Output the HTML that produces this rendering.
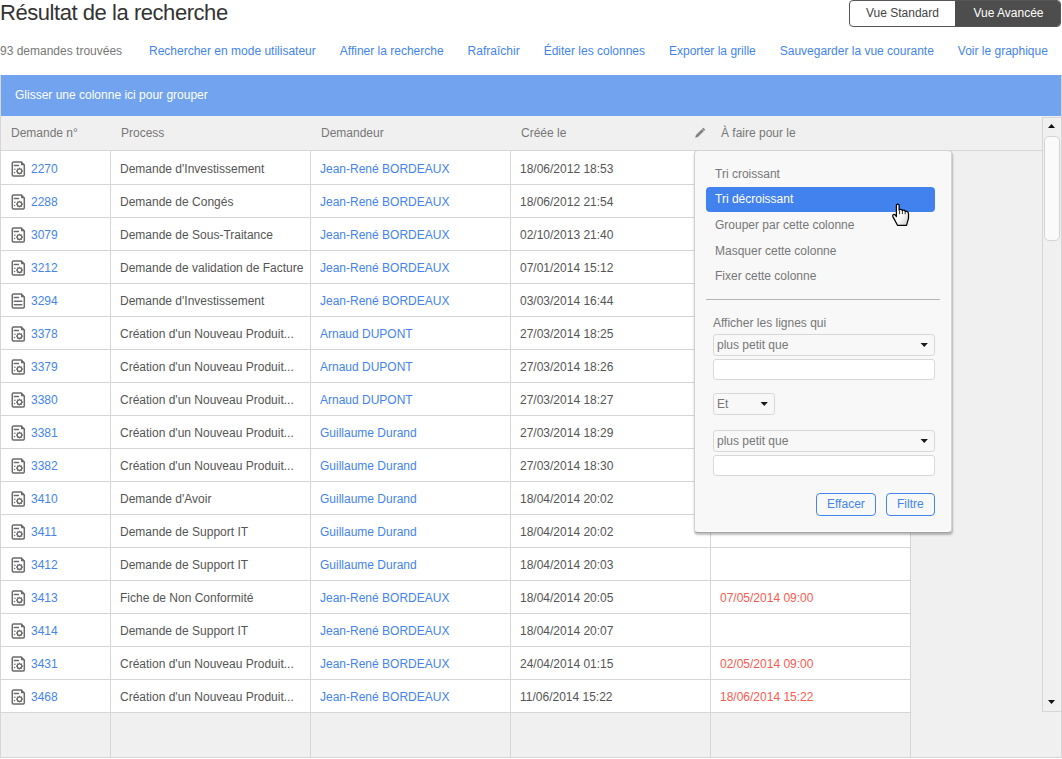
<!DOCTYPE html><html><head><meta charset="utf-8"><style>
*{margin:0;padding:0;box-sizing:border-box}
html,body{width:1062px;height:759px;overflow:hidden;background:#fff;font-family:"Liberation Sans",sans-serif;font-size:12px}
.t{position:absolute;white-space:pre;line-height:14px;font-size:12px}
.ic{position:absolute;display:block}
.title{position:absolute;left:0;top:1px;font-size:22px;letter-spacing:-0.45px;line-height:24px;color:#333333;white-space:pre}
.toggle{position:absolute;left:849px;top:0;width:212px;height:27px;border:1px solid #555;border-radius:4px;overflow:hidden;background:#fff}
.toggle div{position:absolute;top:0;height:25px;line-height:25px;text-align:center;font-size:12px;white-space:pre}
.std{left:0;width:105px;color:#444}
.adv{left:105px;width:105px;padding-left:2px;background:#4d4d4d;color:#fff}
.links{position:absolute;left:149px;top:44px;line-height:14px;white-space:pre;color:#4384ee}
.links span{margin-right:24px}
.grid{position:absolute;left:0;top:75px;width:1062px;height:683px;border:1px solid #d6d6d6;background:#f0f0f0}
.group{position:absolute;left:1px;top:75px;width:1060px;height:41px;background:#71a3ee}
.hdr{position:absolute;left:1px;top:150px;width:1041px;height:1px;background:#d6d6d6}
.body{position:absolute;left:1px;top:151px;width:909px;height:561px;background:#fff}
.hl{position:absolute;left:1px;width:909px;height:1px;background:#d6d6d6}
.vl{position:absolute;top:151px;width:1px;height:606px;background:#d6d6d6}
.sb{position:absolute;left:1042px;top:117px;width:19px;height:595px;border-left:1px solid #d6d6d6;border-top:1px solid #d6d6d6;border-bottom:1px solid #d6d6d6;background:#f0f0f0}
.thumb{position:absolute;left:1px;top:18px;width:16px;height:105px;border:1px solid #d4d4d4;border-radius:5px;background:#fafafa}
.menu{position:absolute;left:694px;top:150px;width:258px;height:383px;background:#f8f8f8;border:1px solid #d2d2d2;border-bottom-color:#a4a4a4;border-radius:4px;box-shadow:0.5px 2px 2px rgba(0,0,0,.25),inset 0 -1px 0 #fcfcfc,inset -1px 0 0 #fafafa}
.sel{position:absolute;left:706px;top:187px;width:229px;height:25px;background:#4282ee;border-radius:4px}
.divider{position:absolute;left:706px;top:299px;width:234px;height:1px;background:#b5b5b5}
.selbox{position:absolute;border:1px solid #d8d8d8;border-radius:3px;background:transparent}
.inp{position:absolute;border:1px solid #d8d8d8;border-radius:3px;background:#fff}
.btn{position:absolute;border:1px solid #4384ee;border-radius:4px;background:#f8f8f8}
</style></head><body><div class="title">Résultat de la recherche</div>
<div class="toggle"><div class="std">Vue Standard</div><div class="adv">Vue Avancée</div></div>
<div class="t" style="left:0px;top:44px;color:#777777;">93 demandes trouvées</div>
<div class="links"><span>Rechercher en mode utilisateur</span><span>Affiner la recherche</span><span>Rafraîchir</span><span>Éditer les colonnes</span><span>Exporter la grille</span><span>Sauvegarder la vue courante</span><span>Voir le graphique</span></div>
<div class="grid"></div>
<div class="group"></div>
<div class="t" style="left:15px;top:88px;color:#ffffff;">Glisser une colonne ici pour grouper</div>
<div class="hdr"></div>
<div class="t" style="left:11px;top:126px;color:#777777;">Demande n°</div>
<div class="t" style="left:121px;top:126px;color:#777777;">Process</div>
<div class="t" style="left:321px;top:126px;color:#777777;">Demandeur</div>
<div class="t" style="left:521px;top:126px;color:#777777;">Créée le</div>
<div class="t" style="left:721px;top:126px;color:#777777;">À faire pour le</div>
<svg class="ic" style="left:692px;top:125px" width="16" height="16" viewBox="0 0 16 16"><path d="M3.2 12.8L3.9 10.1L11.3 2.7L13.3 4.7L5.9 12.1Z" fill="#838383"/><path d="M9.9 4.1L11.9 6.1" stroke="#e8e8e8" stroke-width="0.6"/></svg>
<div class="body"></div>
<div class="hl" style="top:184px"></div>
<div class="hl" style="top:217px"></div>
<div class="hl" style="top:250px"></div>
<div class="hl" style="top:283px"></div>
<div class="hl" style="top:316px"></div>
<div class="hl" style="top:349px"></div>
<div class="hl" style="top:382px"></div>
<div class="hl" style="top:415px"></div>
<div class="hl" style="top:448px"></div>
<div class="hl" style="top:481px"></div>
<div class="hl" style="top:514px"></div>
<div class="hl" style="top:547px"></div>
<div class="hl" style="top:580px"></div>
<div class="hl" style="top:613px"></div>
<div class="hl" style="top:646px"></div>
<div class="hl" style="top:679px"></div>
<div class="hl" style="top:712px"></div>
<div class="vl" style="left:110px"></div>
<div class="vl" style="left:310px"></div>
<div class="vl" style="left:510px"></div>
<div class="vl" style="left:710px"></div>
<div class="vl" style="left:910px"></div>
<svg class="ic" style="left:10px;top:159px" width="17" height="19" viewBox="0 0 17 19"><path d="M3.4 3H11.2L14.3 6.1V15.8Q14.3 16.9 13.2 16.9H3.4Q2.3 16.9 2.3 15.8V4.1Q2.3 3 3.4 3Z" fill="#fff" stroke="#6b6b6b" stroke-width="1.5"/><path d="M11 2.6V6.3H14.7Z" fill="#6b6b6b"/><path d="M4.3 6.5H8.5" stroke="#6b6b6b" stroke-width="1.4" stroke-linecap="round"/><circle cx="4.9" cy="10.2" r="0.8" fill="#6b6b6b"/><circle cx="4.6" cy="13.4" r="0.75" fill="#6b6b6b"/><g transform="translate(9.5 12.1)" stroke="#6b6b6b"><circle r="2.3" fill="none" stroke-width="1.3"/><path d="M0 -3.4V-2M0 2V3.4M-3.4 0H-2M2 0H3.4M-2.4 -2.4L-1.5 -1.5M2.4 2.4L1.5 1.5M-2.4 2.4L-1.5 1.5M2.4 -2.4L1.5 -1.5" stroke-width="1.2"/></g></svg>
<div class="t" style="left:31px;top:162px;color:#4384ee;">2270</div>
<div class="t" style="left:120px;top:162px;color:#555555;">Demande d'Investissement</div>
<div class="t" style="left:320px;top:162px;color:#4384ee;">Jean-René BORDEAUX</div>
<div class="t" style="left:520px;top:162px;color:#555555;">18/06/2012 18:53</div>
<svg class="ic" style="left:10px;top:192px" width="17" height="19" viewBox="0 0 17 19"><path d="M3.4 3H11.2L14.3 6.1V15.8Q14.3 16.9 13.2 16.9H3.4Q2.3 16.9 2.3 15.8V4.1Q2.3 3 3.4 3Z" fill="#fff" stroke="#6b6b6b" stroke-width="1.5"/><path d="M11 2.6V6.3H14.7Z" fill="#6b6b6b"/><path d="M4.3 6.5H8.5" stroke="#6b6b6b" stroke-width="1.4" stroke-linecap="round"/><circle cx="4.9" cy="10.2" r="0.8" fill="#6b6b6b"/><circle cx="4.6" cy="13.4" r="0.75" fill="#6b6b6b"/><g transform="translate(9.5 12.1)" stroke="#6b6b6b"><circle r="2.3" fill="none" stroke-width="1.3"/><path d="M0 -3.4V-2M0 2V3.4M-3.4 0H-2M2 0H3.4M-2.4 -2.4L-1.5 -1.5M2.4 2.4L1.5 1.5M-2.4 2.4L-1.5 1.5M2.4 -2.4L1.5 -1.5" stroke-width="1.2"/></g></svg>
<div class="t" style="left:31px;top:195px;color:#4384ee;">2288</div>
<div class="t" style="left:120px;top:195px;color:#555555;">Demande de Congés</div>
<div class="t" style="left:320px;top:195px;color:#4384ee;">Jean-René BORDEAUX</div>
<div class="t" style="left:520px;top:195px;color:#555555;">18/06/2012 21:54</div>
<svg class="ic" style="left:10px;top:225px" width="17" height="19" viewBox="0 0 17 19"><path d="M3.4 3H11.2L14.3 6.1V15.8Q14.3 16.9 13.2 16.9H3.4Q2.3 16.9 2.3 15.8V4.1Q2.3 3 3.4 3Z" fill="#fff" stroke="#6b6b6b" stroke-width="1.5"/><path d="M11 2.6V6.3H14.7Z" fill="#6b6b6b"/><path d="M4.3 6.5H8.5" stroke="#6b6b6b" stroke-width="1.4" stroke-linecap="round"/><circle cx="4.9" cy="10.2" r="0.8" fill="#6b6b6b"/><circle cx="4.6" cy="13.4" r="0.75" fill="#6b6b6b"/><g transform="translate(9.5 12.1)" stroke="#6b6b6b"><circle r="2.3" fill="none" stroke-width="1.3"/><path d="M0 -3.4V-2M0 2V3.4M-3.4 0H-2M2 0H3.4M-2.4 -2.4L-1.5 -1.5M2.4 2.4L1.5 1.5M-2.4 2.4L-1.5 1.5M2.4 -2.4L1.5 -1.5" stroke-width="1.2"/></g></svg>
<div class="t" style="left:31px;top:228px;color:#4384ee;">3079</div>
<div class="t" style="left:120px;top:228px;color:#555555;">Demande de Sous-Traitance</div>
<div class="t" style="left:320px;top:228px;color:#4384ee;">Jean-René BORDEAUX</div>
<div class="t" style="left:520px;top:228px;color:#555555;">02/10/2013 21:40</div>
<svg class="ic" style="left:10px;top:258px" width="17" height="19" viewBox="0 0 17 19"><path d="M3.4 3H11.2L14.3 6.1V15.8Q14.3 16.9 13.2 16.9H3.4Q2.3 16.9 2.3 15.8V4.1Q2.3 3 3.4 3Z" fill="#fff" stroke="#6b6b6b" stroke-width="1.5"/><path d="M11 2.6V6.3H14.7Z" fill="#6b6b6b"/><path d="M4.3 6.5H8.5" stroke="#6b6b6b" stroke-width="1.4" stroke-linecap="round"/><circle cx="4.9" cy="10.2" r="0.8" fill="#6b6b6b"/><circle cx="4.6" cy="13.4" r="0.75" fill="#6b6b6b"/><g transform="translate(9.5 12.1)" stroke="#6b6b6b"><circle r="2.3" fill="none" stroke-width="1.3"/><path d="M0 -3.4V-2M0 2V3.4M-3.4 0H-2M2 0H3.4M-2.4 -2.4L-1.5 -1.5M2.4 2.4L1.5 1.5M-2.4 2.4L-1.5 1.5M2.4 -2.4L1.5 -1.5" stroke-width="1.2"/></g></svg>
<div class="t" style="left:31px;top:261px;color:#4384ee;">3212</div>
<div class="t" style="left:120px;top:261px;color:#555555;">Demande de validation de Facture</div>
<div class="t" style="left:320px;top:261px;color:#4384ee;">Jean-René BORDEAUX</div>
<div class="t" style="left:520px;top:261px;color:#555555;">07/01/2014 15:12</div>
<svg class="ic" style="left:10px;top:291px" width="17" height="19" viewBox="0 0 17 19"><path d="M3.4 3H11.2L14.3 6.1V15.8Q14.3 16.9 13.2 16.9H3.4Q2.3 16.9 2.3 15.8V4.1Q2.3 3 3.4 3Z" fill="#fff" stroke="#6b6b6b" stroke-width="1.5"/><path d="M11 2.6V6.3H14.7Z" fill="#6b6b6b"/><path d="M4.3 6.5H8.5M4.3 10.2H11.8M4.3 13.7H11.8" stroke="#6b6b6b" stroke-width="1.4" stroke-linecap="round"/></svg>
<div class="t" style="left:31px;top:294px;color:#4384ee;">3294</div>
<div class="t" style="left:120px;top:294px;color:#555555;">Demande d'Investissement</div>
<div class="t" style="left:320px;top:294px;color:#4384ee;">Jean-René BORDEAUX</div>
<div class="t" style="left:520px;top:294px;color:#555555;">03/03/2014 16:44</div>
<svg class="ic" style="left:10px;top:324px" width="17" height="19" viewBox="0 0 17 19"><path d="M3.4 3H11.2L14.3 6.1V15.8Q14.3 16.9 13.2 16.9H3.4Q2.3 16.9 2.3 15.8V4.1Q2.3 3 3.4 3Z" fill="#fff" stroke="#6b6b6b" stroke-width="1.5"/><path d="M11 2.6V6.3H14.7Z" fill="#6b6b6b"/><path d="M4.3 6.5H8.5" stroke="#6b6b6b" stroke-width="1.4" stroke-linecap="round"/><circle cx="4.9" cy="10.2" r="0.8" fill="#6b6b6b"/><circle cx="4.6" cy="13.4" r="0.75" fill="#6b6b6b"/><g transform="translate(9.5 12.1)" stroke="#6b6b6b"><circle r="2.3" fill="none" stroke-width="1.3"/><path d="M0 -3.4V-2M0 2V3.4M-3.4 0H-2M2 0H3.4M-2.4 -2.4L-1.5 -1.5M2.4 2.4L1.5 1.5M-2.4 2.4L-1.5 1.5M2.4 -2.4L1.5 -1.5" stroke-width="1.2"/></g></svg>
<div class="t" style="left:31px;top:327px;color:#4384ee;">3378</div>
<div class="t" style="left:120px;top:327px;color:#555555;">Création d'un Nouveau Produit...</div>
<div class="t" style="left:320px;top:327px;color:#4384ee;">Arnaud DUPONT</div>
<div class="t" style="left:520px;top:327px;color:#555555;">27/03/2014 18:25</div>
<svg class="ic" style="left:10px;top:357px" width="17" height="19" viewBox="0 0 17 19"><path d="M3.4 3H11.2L14.3 6.1V15.8Q14.3 16.9 13.2 16.9H3.4Q2.3 16.9 2.3 15.8V4.1Q2.3 3 3.4 3Z" fill="#fff" stroke="#6b6b6b" stroke-width="1.5"/><path d="M11 2.6V6.3H14.7Z" fill="#6b6b6b"/><path d="M4.3 6.5H8.5" stroke="#6b6b6b" stroke-width="1.4" stroke-linecap="round"/><circle cx="4.9" cy="10.2" r="0.8" fill="#6b6b6b"/><circle cx="4.6" cy="13.4" r="0.75" fill="#6b6b6b"/><g transform="translate(9.5 12.1)" stroke="#6b6b6b"><circle r="2.3" fill="none" stroke-width="1.3"/><path d="M0 -3.4V-2M0 2V3.4M-3.4 0H-2M2 0H3.4M-2.4 -2.4L-1.5 -1.5M2.4 2.4L1.5 1.5M-2.4 2.4L-1.5 1.5M2.4 -2.4L1.5 -1.5" stroke-width="1.2"/></g></svg>
<div class="t" style="left:31px;top:360px;color:#4384ee;">3379</div>
<div class="t" style="left:120px;top:360px;color:#555555;">Création d'un Nouveau Produit...</div>
<div class="t" style="left:320px;top:360px;color:#4384ee;">Arnaud DUPONT</div>
<div class="t" style="left:520px;top:360px;color:#555555;">27/03/2014 18:26</div>
<svg class="ic" style="left:10px;top:390px" width="17" height="19" viewBox="0 0 17 19"><path d="M3.4 3H11.2L14.3 6.1V15.8Q14.3 16.9 13.2 16.9H3.4Q2.3 16.9 2.3 15.8V4.1Q2.3 3 3.4 3Z" fill="#fff" stroke="#6b6b6b" stroke-width="1.5"/><path d="M11 2.6V6.3H14.7Z" fill="#6b6b6b"/><path d="M4.3 6.5H8.5" stroke="#6b6b6b" stroke-width="1.4" stroke-linecap="round"/><circle cx="4.9" cy="10.2" r="0.8" fill="#6b6b6b"/><circle cx="4.6" cy="13.4" r="0.75" fill="#6b6b6b"/><g transform="translate(9.5 12.1)" stroke="#6b6b6b"><circle r="2.3" fill="none" stroke-width="1.3"/><path d="M0 -3.4V-2M0 2V3.4M-3.4 0H-2M2 0H3.4M-2.4 -2.4L-1.5 -1.5M2.4 2.4L1.5 1.5M-2.4 2.4L-1.5 1.5M2.4 -2.4L1.5 -1.5" stroke-width="1.2"/></g></svg>
<div class="t" style="left:31px;top:393px;color:#4384ee;">3380</div>
<div class="t" style="left:120px;top:393px;color:#555555;">Création d'un Nouveau Produit...</div>
<div class="t" style="left:320px;top:393px;color:#4384ee;">Arnaud DUPONT</div>
<div class="t" style="left:520px;top:393px;color:#555555;">27/03/2014 18:27</div>
<svg class="ic" style="left:10px;top:423px" width="17" height="19" viewBox="0 0 17 19"><path d="M3.4 3H11.2L14.3 6.1V15.8Q14.3 16.9 13.2 16.9H3.4Q2.3 16.9 2.3 15.8V4.1Q2.3 3 3.4 3Z" fill="#fff" stroke="#6b6b6b" stroke-width="1.5"/><path d="M11 2.6V6.3H14.7Z" fill="#6b6b6b"/><path d="M4.3 6.5H8.5" stroke="#6b6b6b" stroke-width="1.4" stroke-linecap="round"/><circle cx="4.9" cy="10.2" r="0.8" fill="#6b6b6b"/><circle cx="4.6" cy="13.4" r="0.75" fill="#6b6b6b"/><g transform="translate(9.5 12.1)" stroke="#6b6b6b"><circle r="2.3" fill="none" stroke-width="1.3"/><path d="M0 -3.4V-2M0 2V3.4M-3.4 0H-2M2 0H3.4M-2.4 -2.4L-1.5 -1.5M2.4 2.4L1.5 1.5M-2.4 2.4L-1.5 1.5M2.4 -2.4L1.5 -1.5" stroke-width="1.2"/></g></svg>
<div class="t" style="left:31px;top:426px;color:#4384ee;">3381</div>
<div class="t" style="left:120px;top:426px;color:#555555;">Création d'un Nouveau Produit...</div>
<div class="t" style="left:320px;top:426px;color:#4384ee;">Guillaume Durand</div>
<div class="t" style="left:520px;top:426px;color:#555555;">27/03/2014 18:29</div>
<svg class="ic" style="left:10px;top:456px" width="17" height="19" viewBox="0 0 17 19"><path d="M3.4 3H11.2L14.3 6.1V15.8Q14.3 16.9 13.2 16.9H3.4Q2.3 16.9 2.3 15.8V4.1Q2.3 3 3.4 3Z" fill="#fff" stroke="#6b6b6b" stroke-width="1.5"/><path d="M11 2.6V6.3H14.7Z" fill="#6b6b6b"/><path d="M4.3 6.5H8.5" stroke="#6b6b6b" stroke-width="1.4" stroke-linecap="round"/><circle cx="4.9" cy="10.2" r="0.8" fill="#6b6b6b"/><circle cx="4.6" cy="13.4" r="0.75" fill="#6b6b6b"/><g transform="translate(9.5 12.1)" stroke="#6b6b6b"><circle r="2.3" fill="none" stroke-width="1.3"/><path d="M0 -3.4V-2M0 2V3.4M-3.4 0H-2M2 0H3.4M-2.4 -2.4L-1.5 -1.5M2.4 2.4L1.5 1.5M-2.4 2.4L-1.5 1.5M2.4 -2.4L1.5 -1.5" stroke-width="1.2"/></g></svg>
<div class="t" style="left:31px;top:459px;color:#4384ee;">3382</div>
<div class="t" style="left:120px;top:459px;color:#555555;">Création d'un Nouveau Produit...</div>
<div class="t" style="left:320px;top:459px;color:#4384ee;">Guillaume Durand</div>
<div class="t" style="left:520px;top:459px;color:#555555;">27/03/2014 18:30</div>
<svg class="ic" style="left:10px;top:489px" width="17" height="19" viewBox="0 0 17 19"><path d="M3.4 3H11.2L14.3 6.1V15.8Q14.3 16.9 13.2 16.9H3.4Q2.3 16.9 2.3 15.8V4.1Q2.3 3 3.4 3Z" fill="#fff" stroke="#6b6b6b" stroke-width="1.5"/><path d="M11 2.6V6.3H14.7Z" fill="#6b6b6b"/><path d="M4.3 6.5H8.5" stroke="#6b6b6b" stroke-width="1.4" stroke-linecap="round"/><circle cx="4.9" cy="10.2" r="0.8" fill="#6b6b6b"/><circle cx="4.6" cy="13.4" r="0.75" fill="#6b6b6b"/><g transform="translate(9.5 12.1)" stroke="#6b6b6b"><circle r="2.3" fill="none" stroke-width="1.3"/><path d="M0 -3.4V-2M0 2V3.4M-3.4 0H-2M2 0H3.4M-2.4 -2.4L-1.5 -1.5M2.4 2.4L1.5 1.5M-2.4 2.4L-1.5 1.5M2.4 -2.4L1.5 -1.5" stroke-width="1.2"/></g></svg>
<div class="t" style="left:31px;top:492px;color:#4384ee;">3410</div>
<div class="t" style="left:120px;top:492px;color:#555555;">Demande d'Avoir</div>
<div class="t" style="left:320px;top:492px;color:#4384ee;">Guillaume Durand</div>
<div class="t" style="left:520px;top:492px;color:#555555;">18/04/2014 20:02</div>
<svg class="ic" style="left:10px;top:522px" width="17" height="19" viewBox="0 0 17 19"><path d="M3.4 3H11.2L14.3 6.1V15.8Q14.3 16.9 13.2 16.9H3.4Q2.3 16.9 2.3 15.8V4.1Q2.3 3 3.4 3Z" fill="#fff" stroke="#6b6b6b" stroke-width="1.5"/><path d="M11 2.6V6.3H14.7Z" fill="#6b6b6b"/><path d="M4.3 6.5H8.5" stroke="#6b6b6b" stroke-width="1.4" stroke-linecap="round"/><circle cx="4.9" cy="10.2" r="0.8" fill="#6b6b6b"/><circle cx="4.6" cy="13.4" r="0.75" fill="#6b6b6b"/><g transform="translate(9.5 12.1)" stroke="#6b6b6b"><circle r="2.3" fill="none" stroke-width="1.3"/><path d="M0 -3.4V-2M0 2V3.4M-3.4 0H-2M2 0H3.4M-2.4 -2.4L-1.5 -1.5M2.4 2.4L1.5 1.5M-2.4 2.4L-1.5 1.5M2.4 -2.4L1.5 -1.5" stroke-width="1.2"/></g></svg>
<div class="t" style="left:31px;top:525px;color:#4384ee;">3411</div>
<div class="t" style="left:120px;top:525px;color:#555555;">Demande de Support IT</div>
<div class="t" style="left:320px;top:525px;color:#4384ee;">Guillaume Durand</div>
<div class="t" style="left:520px;top:525px;color:#555555;">18/04/2014 20:02</div>
<svg class="ic" style="left:10px;top:555px" width="17" height="19" viewBox="0 0 17 19"><path d="M3.4 3H11.2L14.3 6.1V15.8Q14.3 16.9 13.2 16.9H3.4Q2.3 16.9 2.3 15.8V4.1Q2.3 3 3.4 3Z" fill="#fff" stroke="#6b6b6b" stroke-width="1.5"/><path d="M11 2.6V6.3H14.7Z" fill="#6b6b6b"/><path d="M4.3 6.5H8.5" stroke="#6b6b6b" stroke-width="1.4" stroke-linecap="round"/><circle cx="4.9" cy="10.2" r="0.8" fill="#6b6b6b"/><circle cx="4.6" cy="13.4" r="0.75" fill="#6b6b6b"/><g transform="translate(9.5 12.1)" stroke="#6b6b6b"><circle r="2.3" fill="none" stroke-width="1.3"/><path d="M0 -3.4V-2M0 2V3.4M-3.4 0H-2M2 0H3.4M-2.4 -2.4L-1.5 -1.5M2.4 2.4L1.5 1.5M-2.4 2.4L-1.5 1.5M2.4 -2.4L1.5 -1.5" stroke-width="1.2"/></g></svg>
<div class="t" style="left:31px;top:558px;color:#4384ee;">3412</div>
<div class="t" style="left:120px;top:558px;color:#555555;">Demande de Support IT</div>
<div class="t" style="left:320px;top:558px;color:#4384ee;">Guillaume Durand</div>
<div class="t" style="left:520px;top:558px;color:#555555;">18/04/2014 20:03</div>
<svg class="ic" style="left:10px;top:588px" width="17" height="19" viewBox="0 0 17 19"><path d="M3.4 3H11.2L14.3 6.1V15.8Q14.3 16.9 13.2 16.9H3.4Q2.3 16.9 2.3 15.8V4.1Q2.3 3 3.4 3Z" fill="#fff" stroke="#6b6b6b" stroke-width="1.5"/><path d="M11 2.6V6.3H14.7Z" fill="#6b6b6b"/><path d="M4.3 6.5H8.5" stroke="#6b6b6b" stroke-width="1.4" stroke-linecap="round"/><circle cx="4.9" cy="10.2" r="0.8" fill="#6b6b6b"/><circle cx="4.6" cy="13.4" r="0.75" fill="#6b6b6b"/><g transform="translate(9.5 12.1)" stroke="#6b6b6b"><circle r="2.3" fill="none" stroke-width="1.3"/><path d="M0 -3.4V-2M0 2V3.4M-3.4 0H-2M2 0H3.4M-2.4 -2.4L-1.5 -1.5M2.4 2.4L1.5 1.5M-2.4 2.4L-1.5 1.5M2.4 -2.4L1.5 -1.5" stroke-width="1.2"/></g></svg>
<div class="t" style="left:31px;top:591px;color:#4384ee;">3413</div>
<div class="t" style="left:120px;top:591px;color:#555555;">Fiche de Non Conformité</div>
<div class="t" style="left:320px;top:591px;color:#4384ee;">Jean-René BORDEAUX</div>
<div class="t" style="left:520px;top:591px;color:#555555;">18/04/2014 20:05</div>
<div class="t" style="left:720px;top:591px;color:#f95a4f;">07/05/2014 09:00</div>
<svg class="ic" style="left:10px;top:621px" width="17" height="19" viewBox="0 0 17 19"><path d="M3.4 3H11.2L14.3 6.1V15.8Q14.3 16.9 13.2 16.9H3.4Q2.3 16.9 2.3 15.8V4.1Q2.3 3 3.4 3Z" fill="#fff" stroke="#6b6b6b" stroke-width="1.5"/><path d="M11 2.6V6.3H14.7Z" fill="#6b6b6b"/><path d="M4.3 6.5H8.5" stroke="#6b6b6b" stroke-width="1.4" stroke-linecap="round"/><circle cx="4.9" cy="10.2" r="0.8" fill="#6b6b6b"/><circle cx="4.6" cy="13.4" r="0.75" fill="#6b6b6b"/><g transform="translate(9.5 12.1)" stroke="#6b6b6b"><circle r="2.3" fill="none" stroke-width="1.3"/><path d="M0 -3.4V-2M0 2V3.4M-3.4 0H-2M2 0H3.4M-2.4 -2.4L-1.5 -1.5M2.4 2.4L1.5 1.5M-2.4 2.4L-1.5 1.5M2.4 -2.4L1.5 -1.5" stroke-width="1.2"/></g></svg>
<div class="t" style="left:31px;top:624px;color:#4384ee;">3414</div>
<div class="t" style="left:120px;top:624px;color:#555555;">Demande de Support IT</div>
<div class="t" style="left:320px;top:624px;color:#4384ee;">Jean-René BORDEAUX</div>
<div class="t" style="left:520px;top:624px;color:#555555;">18/04/2014 20:07</div>
<svg class="ic" style="left:10px;top:654px" width="17" height="19" viewBox="0 0 17 19"><path d="M3.4 3H11.2L14.3 6.1V15.8Q14.3 16.9 13.2 16.9H3.4Q2.3 16.9 2.3 15.8V4.1Q2.3 3 3.4 3Z" fill="#fff" stroke="#6b6b6b" stroke-width="1.5"/><path d="M11 2.6V6.3H14.7Z" fill="#6b6b6b"/><path d="M4.3 6.5H8.5" stroke="#6b6b6b" stroke-width="1.4" stroke-linecap="round"/><circle cx="4.9" cy="10.2" r="0.8" fill="#6b6b6b"/><circle cx="4.6" cy="13.4" r="0.75" fill="#6b6b6b"/><g transform="translate(9.5 12.1)" stroke="#6b6b6b"><circle r="2.3" fill="none" stroke-width="1.3"/><path d="M0 -3.4V-2M0 2V3.4M-3.4 0H-2M2 0H3.4M-2.4 -2.4L-1.5 -1.5M2.4 2.4L1.5 1.5M-2.4 2.4L-1.5 1.5M2.4 -2.4L1.5 -1.5" stroke-width="1.2"/></g></svg>
<div class="t" style="left:31px;top:657px;color:#4384ee;">3431</div>
<div class="t" style="left:120px;top:657px;color:#555555;">Création d'un Nouveau Produit...</div>
<div class="t" style="left:320px;top:657px;color:#4384ee;">Jean-René BORDEAUX</div>
<div class="t" style="left:520px;top:657px;color:#555555;">24/04/2014 01:15</div>
<div class="t" style="left:720px;top:657px;color:#f95a4f;">02/05/2014 09:00</div>
<svg class="ic" style="left:10px;top:687px" width="17" height="19" viewBox="0 0 17 19"><path d="M3.4 3H11.2L14.3 6.1V15.8Q14.3 16.9 13.2 16.9H3.4Q2.3 16.9 2.3 15.8V4.1Q2.3 3 3.4 3Z" fill="#fff" stroke="#6b6b6b" stroke-width="1.5"/><path d="M11 2.6V6.3H14.7Z" fill="#6b6b6b"/><path d="M4.3 6.5H8.5" stroke="#6b6b6b" stroke-width="1.4" stroke-linecap="round"/><circle cx="4.9" cy="10.2" r="0.8" fill="#6b6b6b"/><circle cx="4.6" cy="13.4" r="0.75" fill="#6b6b6b"/><g transform="translate(9.5 12.1)" stroke="#6b6b6b"><circle r="2.3" fill="none" stroke-width="1.3"/><path d="M0 -3.4V-2M0 2V3.4M-3.4 0H-2M2 0H3.4M-2.4 -2.4L-1.5 -1.5M2.4 2.4L1.5 1.5M-2.4 2.4L-1.5 1.5M2.4 -2.4L1.5 -1.5" stroke-width="1.2"/></g></svg>
<div class="t" style="left:31px;top:690px;color:#4384ee;">3468</div>
<div class="t" style="left:120px;top:690px;color:#555555;">Création d'un Nouveau Produit...</div>
<div class="t" style="left:320px;top:690px;color:#4384ee;">Jean-René BORDEAUX</div>
<div class="t" style="left:520px;top:690px;color:#555555;">11/06/2014 15:22</div>
<div class="t" style="left:720px;top:690px;color:#f95a4f;">18/06/2014 15:22</div>
<div class="sb"><div class="thumb"></div></div>
<svg class="ic" style="left:1048px;top:123px" width="9" height="6"><path d="M0 5H7L3.5 1Z" fill="#111"/></svg>
<svg class="ic" style="left:1048px;top:699px" width="9" height="6"><path d="M0 1H7L3.5 5Z" fill="#111"/></svg>
<div class="menu"></div>
<div class="sel"></div>
<div class="t" style="left:715px;top:167px;color:#777777;">Tri croissant</div>
<div class="t" style="left:715px;top:192px;color:#ffffff;">Tri décroissant</div>
<div class="t" style="left:715px;top:218px;color:#777777;">Grouper par cette colonne</div>
<div class="t" style="left:715px;top:244px;color:#777777;">Masquer cette colonne</div>
<div class="t" style="left:715px;top:269px;color:#777777;">Fixer cette colonne</div>
<div class="divider"></div>
<div class="t" style="left:713px;top:316px;color:#777777;">Afficher les lignes qui</div>
<div class="selbox" style="left:713px;top:334px;width:222px;height:22px"></div>
<div class="t" style="left:717px;top:338px;color:#777777;">plus petit que</div>
<svg class="ic" style="left:920px;top:342px" width="9" height="6"><path d="M0.6 1H7.9L4.25 5Z" fill="#1a1a1a"/></svg>
<div class="inp" style="left:713px;top:359px;width:222px;height:21px"></div>
<div class="selbox" style="left:713px;top:393px;width:62px;height:22px"></div>
<div class="t" style="left:717px;top:397px;color:#777777;">Et</div>
<svg class="ic" style="left:760px;top:401px" width="9" height="6"><path d="M0.6 1H7.9L4.25 5Z" fill="#1a1a1a"/></svg>
<div class="selbox" style="left:713px;top:430px;width:222px;height:22px"></div>
<div class="t" style="left:717px;top:434px;color:#777777;">plus petit que</div>
<svg class="ic" style="left:920px;top:438px" width="9" height="6"><path d="M0.6 1H7.9L4.25 5Z" fill="#1a1a1a"/></svg>
<div class="inp" style="left:713px;top:455px;width:222px;height:21px"></div>
<div class="btn" style="left:816px;top:493px;width:60px;height:23px"></div>
<div class="t" style="left:827px;top:497px;color:#4384ee;">Effacer</div>
<div class="btn" style="left:886px;top:493px;width:49px;height:23px"></div>
<div class="t" style="left:897px;top:497px;color:#4384ee;">Filtre</div>
<svg class="ic" style="left:890px;top:202px" width="22" height="26" viewBox="0 0 22 26"><defs><linearGradient id="hg" x1="0.3" y1="0.5" x2="0.8" y2="1"><stop offset="0.25" stop-color="#fff"/><stop offset="1" stop-color="#d5d5d5"/></linearGradient></defs><path d="M6.4 3.3Q6.4 2.2 7.7 2.2Q9.1 2.2 9.1 3.3V8.2Q9.3 7.4 10.8 7.4Q12.2 7.4 12.3 8.4Q12.8 8 14 8.2Q15 8.4 15.2 9.4Q15.7 9 16.8 9.3Q18.5 9.7 18.5 11.5V16.3L16.5 23.3H7.5L2.9 14.6Q2.3 13.4 3.2 12.7Q4.2 12.1 5.2 12.9L6.4 14.5Z" fill="url(#hg)" stroke="#000" stroke-width="1.25" stroke-linejoin="round"/><path d="M9.6 8.6V12.2M12.4 9V12.2M15.2 9.8V12.2" stroke="#000" stroke-width="0.85"/></svg></body></html>
